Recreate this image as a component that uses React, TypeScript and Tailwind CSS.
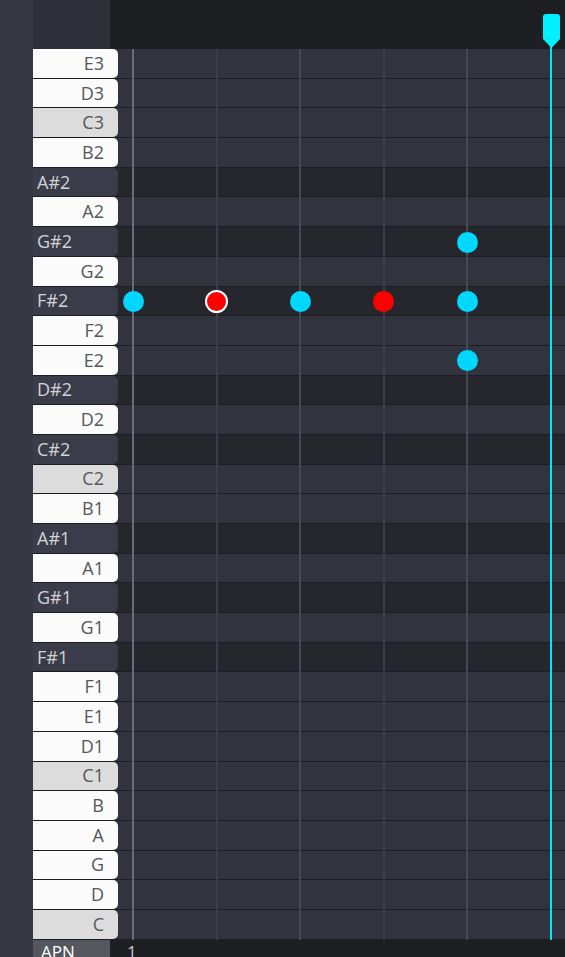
const notes = [
  'E3', 'D3', 'C3', 'B2', 'A#2', 'A2', 'G#2', 'G2', 'F#2', 'F2', 'E2', 'D#2', 'D2', 'C#2', 'C2',
  'B1', 'A#1', 'A1', 'G#1', 'G1', 'F#1', 'F1', 'E1', 'D1', 'C1', 'B', 'A', 'G', 'D', 'C',
];

const ROW = 29.7;
const TOP = 49;
const cols = [133, 216.5, 300, 383.5, 467];
const lineColors = ['bg-[#6a6d76]', 'bg-[#3b3e47]', 'bg-[#464952]', 'bg-[#3b3e47]', 'bg-[#464952]'];

// [row index, column index, kind]
const dots: [number, number, 'cyan' | 'red' | 'sel'][] = [
  [6, 4, 'cyan'],
  [8, 0, 'cyan'],
  [8, 1, 'sel'],
  [8, 2, 'cyan'],
  [8, 3, 'red'],
  [8, 4, 'cyan'],
  [10, 4, 'cyan'],
];

function KeyRow({ note }: { note: string }) {
  const sharp = note.includes('#');
  const isC = note.startsWith('C') && !sharp;
  return (
    <div className={`flex h-[29.7px] border-b border-[#1c1d21] ${sharp ? 'bg-[#26272d]' : 'bg-[#31343e]'}`}>
      {sharp ? (
        <div className="w-[85px] h-full rounded-r-[5px] bg-[#3a3c49] text-[#d2d3d6] text-[18px] pl-[4px] flex items-center">
          {note}
        </div>
      ) : (
        <div
          className={`w-[85px] h-full rounded-r-[5px] text-[#555659] text-[18px] pr-[14px] flex items-center justify-end ${
            isC ? 'bg-[#dcdcdc]' : 'bg-[#fbfbfb]'
          }`}
        >
          {note}
        </div>
      )}
      <div className="flex-1" />
    </div>
  );
}

export default function App() {
  return (
    <div
      className="w-[565px] h-[957px] flex bg-[#363943] overflow-hidden"
      style={{ fontFamily: '"Open Sans", "Noto Sans", sans-serif' }}
    >
      <div className="w-[33px] shrink-0" />
      <div className="flex-1 flex flex-col relative">
        {/* Header */}
        <div className="flex h-[49px] shrink-0">
          <div className="w-[77px] bg-[#2e3039]" />
          <div className="flex-1 bg-[#1e1f23]" />
        </div>

        {/* Rows */}
        <div className="flex flex-col">
          {notes.map((n) => (
            <KeyRow key={n} note={n} />
          ))}
        </div>

        {/* Bottom bar */}
        <div className="flex h-[17px] flex-1 items-stretch">
          <div className="w-[77px] bg-[#55575e] text-white text-[17px] leading-[24px] pl-[8px] overflow-hidden">APN</div>
          <div className="flex-1 bg-[#1e1f23] text-[#c8c9cc] text-[17px] leading-[24px] pl-[17px] overflow-hidden">1</div>
        </div>

        {/* Grid lines, notes and playhead */}
        <div className="absolute left-[-33px] top-0 w-[565px] h-[940px] pointer-events-none">
          {cols.map((x, i) => (
            <div
              key={x}
              className={`absolute w-[2px] ${lineColors[i]}`}
              style={{ left: x - 1, top: TOP, height: 940 - TOP }}
            />
          ))}
          {dots.map(([r, c, kind]) => {
            const cy = TOP + r * ROW + ROW / 2;
            const cx = cols[c];
            if (kind === 'sel') {
              return (
                <div
                  key={`${r}-${c}`}
                  className="absolute w-[23px] h-[23px] rounded-full bg-[#ff0000] border-2 border-white"
                  style={{ left: cx - 11.5, top: cy - 11.5 }}
                />
              );
            }
            return (
              <div
                key={`${r}-${c}`}
                className={`absolute w-[21px] h-[21px] rounded-full ${kind === 'red' ? 'bg-[#ff0000]' : 'bg-[#00d7ff]'}`}
                style={{ left: cx - 10.5, top: cy - 10.5 }}
              />
            );
          })}
          <div className="absolute left-[550px] top-[44px] w-[2px] h-[896px] bg-[#00e8f8]" />
          <svg className="absolute left-[542px] top-[13px]" width="19" height="36" viewBox="0 0 19 36">
            <path d="M1 4 Q1 1 4 1 H15 Q18 1 18 4 V26 L9.5 35 L1 26 Z" fill="#00f0ff" />
          </svg>
        </div>
      </div>
    </div>
  );
}
